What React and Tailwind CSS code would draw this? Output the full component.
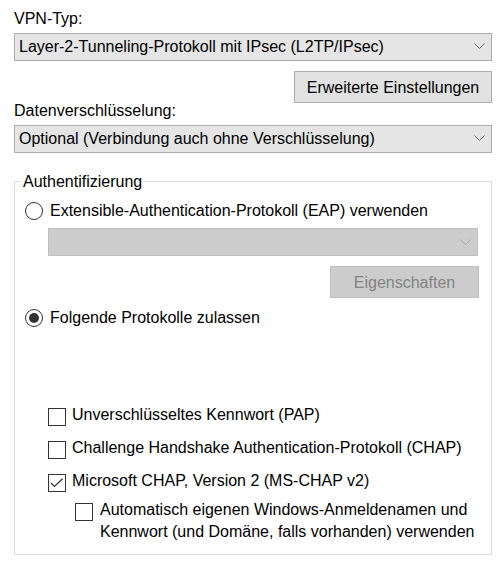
import React from "react";

function Chevron({ color }) {
  return (
    <svg width="11" height="7" viewBox="0 0 11 7" className="shrink-0">
      <path d="M0.5 0.5 L5.5 5.5 L10.5 0.5" fill="none" stroke={color} strokeWidth="1" />
    </svg>
  );
}

function Radio({ checked }) {
  return (
    <span className="w-[18px] h-[18px] shrink-0 rounded-full border border-[#333333] bg-white flex items-center justify-center">
      {checked && <span className="w-[10px] h-[10px] rounded-full bg-[#333333]" />}
    </span>
  );
}

function Check({ checked, top = "mt-[3px]" }) {
  return (
    <span className={`${top} w-[18px] h-[18px] shrink-0 border border-[#333333] bg-white flex`}>
      {checked && (
        <svg width="16" height="16" viewBox="0 0 16 16">
          <path d="M2 8 L5.5 11.5 L13.5 3.8" fill="none" stroke="#333333" strokeWidth="1.2" />
        </svg>
      )}
    </span>
  );
}

export default function App() {
  return (
    <div className="w-[502px] h-[562px] bg-white text-black text-[16px] leading-[19px] font-['Liberation_Sans',Arial,sans-serif] overflow-hidden">
      <div className="flex flex-col pl-[14px] pr-[10px] pt-[9px]">
        <div className="h-[19px]">VPN-Typ:</div>
        <div className="mt-[5px] h-[28px] bg-[#e5e5e5] border border-[#adadad] flex items-center justify-between pl-[4px] pr-[6px] pb-[1px]">
          <span>Layer-2-Tunneling-Protokoll mit IPsec (L2TP/IPsec)</span>
          <Chevron color="#6a6a6a" />
        </div>
        <div className="mt-[10px] flex justify-end">
          <div className="h-[32px] w-[198px] bg-[#e1e1e1] border border-[#adadad] flex items-center justify-center">
            Erweiterte Einstellungen
          </div>
        </div>
        <div className="-mt-[2px] h-[19px]">Datenverschlüsselung:</div>
        <div className="mt-[5px] h-[28px] bg-[#e5e5e5] border border-[#adadad] flex items-center justify-between pl-[4px] pr-[6px] pb-[1px]">
          <span>Optional (Verbindung auch ohne Verschlüsselung)</span>
          <Chevron color="#6a6a6a" />
        </div>

        <fieldset className="mt-[19px] border border-[#dcdcdc] flex flex-col pb-[11px]">
          <legend className="ml-[6px] px-[2px] leading-[19px]">Authentifizierung</legend>

          <div className="mt-[10px] ml-[10px] flex items-center gap-[7px] h-[19px]">
            <Radio checked={false} />
            <span>Extensible-Authentication-Protokoll (EAP) verwenden</span>
          </div>

          <div className="mt-[8px] ml-[33px] mr-[13px] h-[28px] bg-[#cccccc] border border-[#bfbfbf] flex items-center justify-end pr-[6px]">
            <Chevron color="#a9a9a9" />
          </div>

          <div className="mt-[10px] mr-[12px] flex justify-end">
            <div className="h-[32px] w-[149px] bg-[#cccccc] border border-[#bfbfbf] flex items-center justify-center text-[#838383]">
              Eigenschaften
            </div>
          </div>

          <div className="mt-[10px] ml-[10px] flex items-center gap-[7px] h-[19px]">
            <Radio checked={true} />
            <span>Folgende Protokolle zulassen</span>
          </div>

          <div className="mt-[78px] ml-[33px] flex items-start gap-[6px]">
            <Check checked={false} />
            <span>Unverschlüsseltes Kennwort (PAP)</span>
          </div>
          <div className="mt-[12px] ml-[33px] flex items-start gap-[6px]">
            <Check checked={false} />
            <span>Challenge Handshake Authentication-Protokoll (CHAP)</span>
          </div>
          <div className="mt-[12px] ml-[33px] flex items-start gap-[6px]">
            <Check checked={true} />
            <span>Microsoft CHAP, Version 2 (MS-CHAP v2)</span>
          </div>
          <div className="mt-[7px] ml-[60px] flex items-start gap-[7px] leading-[22px]">
            <Check checked={false} top="mt-[4px]" />
            <span>
              Automatisch eigenen Windows-Anmeldenamen und
              <br />
              Kennwort (und Domäne, falls vorhanden) verwenden
            </span>
          </div>
        </fieldset>
      </div>
    </div>
  );
}
